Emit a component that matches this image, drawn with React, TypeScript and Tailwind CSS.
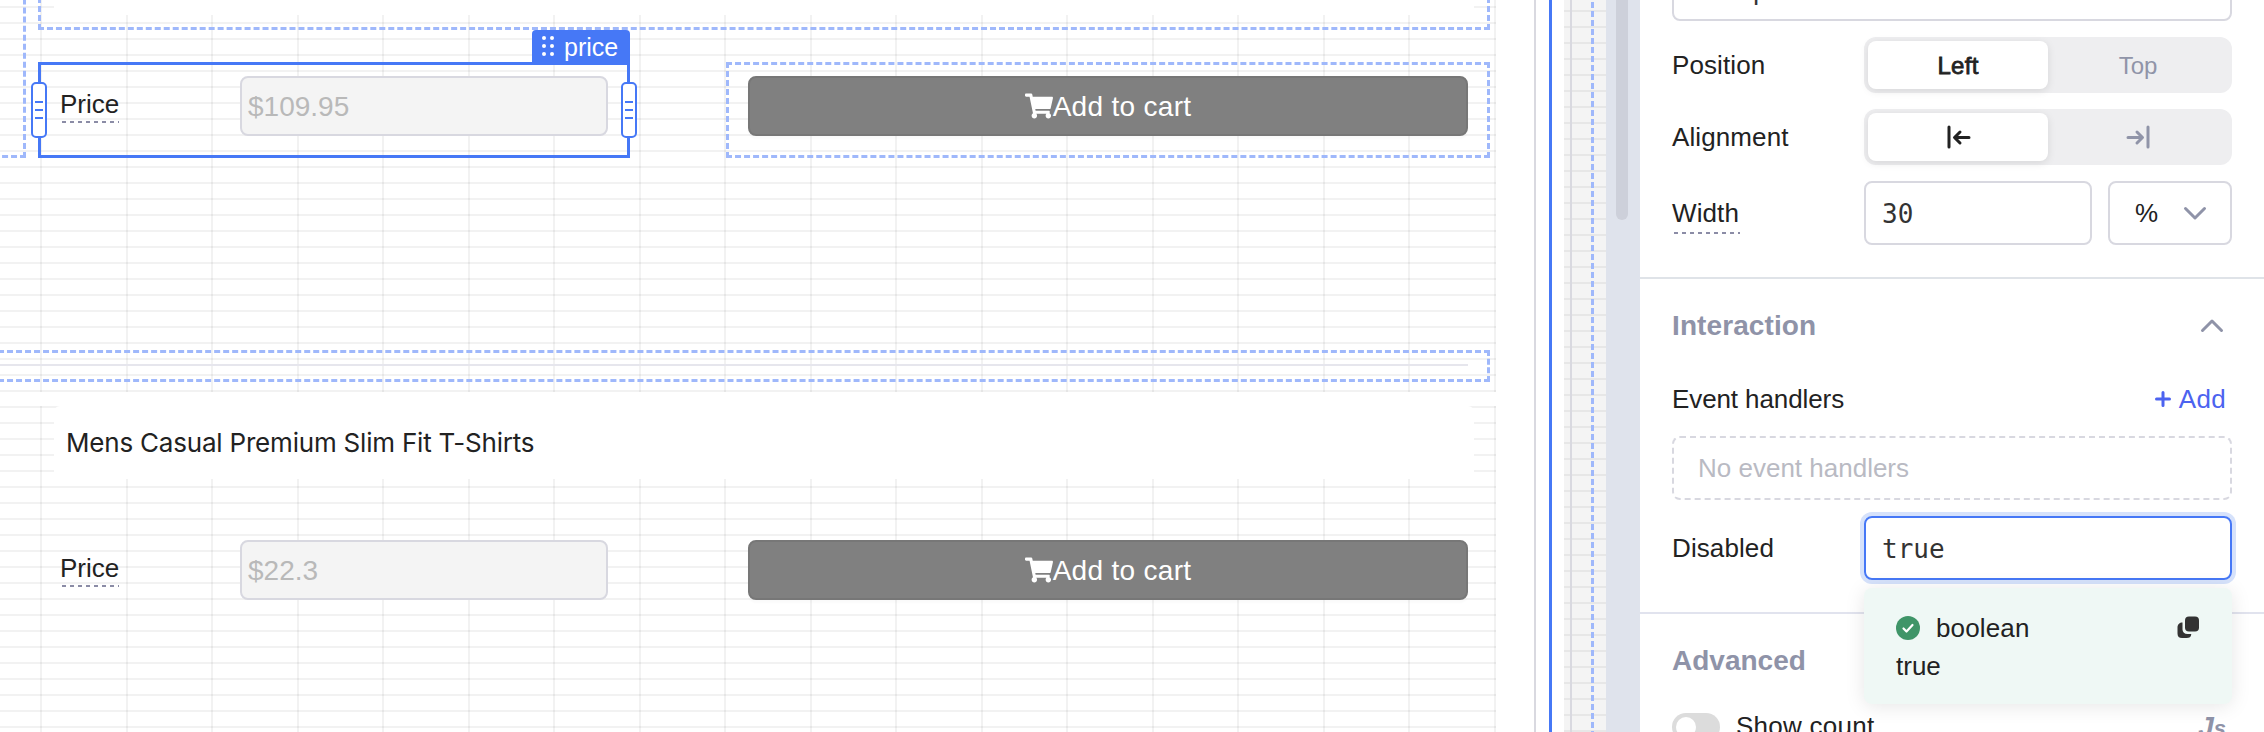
import React from "react";
import { FaShoppingCart } from "react-icons/fa";

const BTN =
  "flex h-[60px] w-[720px] items-center justify-center rounded-[8px] border-2 border-[#777777] bg-[#808080] text-[28px] leading-[32px] text-white shadow-[0_3px_2px_rgba(0,0,0,0.02)]";

function PriceField({ value }: { value: string }) {
  return (
    <div className="flex">
      <div className="w-[180px] pt-[11px]">
        <span className="relative inline-block text-[26px] leading-[34px] text-[#222]">
          Price
          <svg className="absolute bottom-[-2px] left-[2px]" width="57" height="2">
            <line x1="0" y1="1" x2="57" y2="1" stroke="#8b8ca6" strokeWidth="2" strokeDasharray="4 4" />
          </svg>
        </span>
      </div>
      <div className="flex h-[60px] w-[368px] items-center rounded-[8px] border-2 border-[#d8d8e0] bg-[#f4f4f4] pl-[6px] pt-[2px] text-[28px] leading-[32px] text-[#b9b9b9]">
        {value}
      </div>
    </div>
  );
}

function CartButton() {
  return (
    <div className={BTN}>
      <FaShoppingCart className="size-[28px] shrink-0" />
      <span className="pt-[2px] tracking-[0.3px]">Add to cart</span>
    </div>
  );
}

function Handle({ className }: { className: string }) {
  return (
    <div className={"absolute flex h-[56px] w-[16px] flex-col items-center justify-center gap-[6px] rounded-[5px] border-2 border-[#4678f6] bg-white " + className}>
      <i className="h-[2px] w-[8px] bg-[#4678f6]" />
      <i className="h-[2px] w-[8px] bg-[#4678f6]" />
      <i className="h-[2px] w-[8px] bg-[#4678f6]" />
    </div>
  );
}

function Grid({ className }: { className: string }) {
  return (
    <svg className={"absolute left-0 w-[1496px] " + className} height="450" width="1496">
      {Array.from({ length: 29 }, (_, i) => (
        <rect key={"h" + i} x="0" y={i * 16} width="1496" height="2" fill="#000" fillOpacity="0.05" />
      ))}
      {Array.from({ length: 18 }, (_, i) => (
        <rect key={"v" + i} x={Math.floor(40.5 + i * 85.5)} y="0" width="2" height="450" fill="#000" fillOpacity="0.05" />
      ))}
    </svg>
  );
}

function Item({ title, price, className }: { title: string; price: string; className: string }) {
  return (
    <div className={"absolute left-0 h-[450px] w-[1496px] " + className}>
      <Grid className="top-0" />
      <div className="relative ml-[54px] flex h-[73px] w-[1420px] items-center rounded-tl-[6px] rounded-tr-[6px] bg-white pl-[12px] font-['Inter'] text-[26px] leading-[36px] tracking-[-0.2px] text-[#222]">
        {title}
      </div>
      <div className="relative mt-[61px] flex pl-[60px]">
        <PriceField value={price} />
        <div className="ml-[140px]">
          <CartButton />
        </div>
      </div>
    </div>
  );
}

function Canvas() {
  return (
    <div className="relative h-full w-[1564px] shrink-0 overflow-hidden bg-white">
      <Item title="" price="$109.95" className="top-[-58px]" />
      <Item title="Mens Casual Premium Slim Fit T-Shirts" price="$22.3" className="top-[406px]" />

      <div className="absolute left-[-500px] top-[-200px] h-[358px] w-[526px] border-[3px] border-dashed border-[#9fb8fb]" />
      <div className="absolute left-[38px] top-[-200px] h-[230px] w-[1452px] border-[3px] border-dashed border-[#9fb8fb]" />
      <div className="absolute left-[726px] top-[62px] h-[96px] w-[764px] border-[3px] border-dashed border-[#9fb8fb]" />
      <div className="absolute left-[-20px] top-[350px] h-[32px] w-[1510px] border-[3px] border-dashed border-[#9fb8fb]" />
      <div className="absolute left-0 top-[364px] h-[2px] w-[1468px] bg-[#e6e6ed]" />

      <div className="absolute left-[38px] top-[62px] h-[96px] w-[592px] border-[3px] border-[#4678f6]">
        <Handle className="left-[-10px] top-[17px]" />
        <Handle className="right-[-10px] top-[17px]" />
        <div className="absolute right-[-3px] top-[-35px] flex h-[32px] w-[98px] items-center rounded-t-[4px] bg-[#4678f6] text-white">
          <svg className="ml-[9px]" width="14" height="22" fill="#fff">
            <circle cx="3" cy="3" r="2" />
            <circle cx="11" cy="3" r="2" />
            <circle cx="3" cy="11" r="2" />
            <circle cx="11" cy="11" r="2" />
            <circle cx="3" cy="19" r="2" />
            <circle cx="11" cy="19" r="2" />
          </svg>
          <span className="ml-[9px] pt-[1px] text-[25px] leading-[28px]">price</span>
        </div>
      </div>

      <div className="absolute left-[1534px] top-0 h-full w-[2px] bg-[#d9d9e0]" />
      <div className="absolute left-[1549px] top-0 h-full w-[3px] bg-[#4678f6]" />
    </div>
  );
}

function Gutter() {
  return (
    <div className="flex h-full w-[76px] shrink-0">
      <svg width="42" height="732" className="shrink-0 bg-[#f4f4f4]">
        {Array.from({ length: 46 }, (_, i) => (
          <rect key={i} x="0" y={10 + i * 16} width="42" height="2" fill="#000" fillOpacity="0.05" />
        ))}
        <rect x="6" y="0" width="2" height="732" fill="#d9d9e0" />
        <line x1="28.5" y1="-7" x2="28.5" y2="732" stroke="#9fb8fb" strokeWidth="3" strokeDasharray="6 3" />
      </svg>
      <div className="flex w-[34px] justify-center bg-[#dfe3ec]">
        <div className="mr-[2px] h-[220px] w-[12px] rounded-b-full bg-[#cdd0da]" />
      </div>
    </div>
  );
}

function Row({ label, children, className, dotted }: { label: string; children: React.ReactNode; className: string; dotted?: boolean }) {
  return (
    <div className={"flex items-center " + className}>
      <div className="w-[192px]">
        <span className="relative inline-block text-[26px] leading-[34px] tracking-[0.1px] text-[#222]">
          {label}
          {dotted && (
            <svg className="absolute bottom-[-4px] left-[2px]" width="66" height="2">
              <line x1="0" y1="1" x2="66" y2="1" stroke="#8b8ca6" strokeWidth="2" strokeDasharray="4 4" />
            </svg>
          )}
        </span>
      </div>
      {children}
    </div>
  );
}

function Segment({ left, right }: { left: React.ReactNode; right: React.ReactNode }) {
  return (
    <div className="flex h-[56px] w-[368px] rounded-[12px] bg-[#eeeef0] p-[4px] text-[24px] leading-[30px]">
      <div className="flex w-[180px] items-center justify-center rounded-[8px] bg-white tracking-[0.3px] text-[#222] shadow-[0_2px_8px_rgba(0,0,0,0.1)] [-webkit-text-stroke:0.8px_#222]">
        {left}
      </div>
      <div className="flex w-[180px] items-center justify-center text-[#9094a8]">{right}</div>
    </div>
  );
}

function Panel() {
  return (
    <div className="relative h-full w-[624px] shrink-0 overflow-hidden bg-white px-[32px]">
      <div className="mt-[-43px] flex h-[64px] items-center rounded-[8px] border-2 border-[#d8d8e0] pl-[16px] pt-[2px] font-['DejaVu_Sans_Mono'] text-[26px] leading-[30px] text-[#333]">
        The price
      </div>
      <Row label="Position" className="mt-[16px]">
        <Segment left={<span className="pt-[2px]">Left</span>} right={<span className="pt-[2px]">Top</span>} />
      </Row>
      <Row label="Alignment" className="mt-[16px]">
        <Segment
          left={
            <svg className="ml-[2px]" width="24" height="24" fill="none" stroke="#222" strokeWidth="3" strokeLinecap="round" strokeLinejoin="round">
              <path d="M2 2v20M22 12.500H8M13 7L7.500 12.500l5.500 5.500" />
            </svg>
          }
          right={
            <svg width="24" height="24" fill="none" stroke="#9094a8" strokeWidth="3" strokeLinecap="round" strokeLinejoin="round">
              <path d="M22 2v20M2 12.500h14M11 7L16.500 12.500l-5.500 5.500" />
            </svg>
          }
        />
      </Row>
      <Row label="Width" dotted className="mt-[16px]">
        <div className="flex h-[64px] w-[228px] items-center rounded-[8px] border-2 border-[#d8d8e0] pl-[16px] pt-[2px] font-['DejaVu_Sans_Mono'] text-[26px] leading-[30px] text-[#333]">30</div>
        <div className="ml-[16px] flex h-[64px] w-[124px] items-center rounded-[8px] border-2 border-[#d8d8e0] pl-[25px] text-[26px] text-[#222]">
          %
          <svg className="ml-[25px]" width="24" height="16" fill="none" stroke="#8f93a8" strokeWidth="3" strokeLinecap="round" strokeLinejoin="round">
            <path d="M2.500 3.500l9.500 9.500 9.500-9.500" />
          </svg>
        </div>
      </Row>
      <div className="-mx-[32px] mt-[32px] h-[2px] bg-[#dfe3e8]" />
      <div className="mt-[30px] flex h-[34px] items-center justify-between text-[28px] font-bold leading-[34px] tracking-[0.1px] text-[#8f93a8]">
        Interaction
        <svg className="mr-[8px]" width="24" height="16" fill="none" stroke="#8f93a8" strokeWidth="3" strokeLinecap="round" strokeLinejoin="round">
          <path d="M2.500 12.500L12 3l9.500 9.500" />
        </svg>
      </div>
      <div className="mt-[39px] flex h-[34px] items-center justify-between text-[26px] leading-[34px] tracking-[-0.1px] text-[#222]">
        Event handlers
        <span className="mr-[6px] flex items-center gap-[8px] tracking-[0.3px] text-[#4c63f0]">
          <svg width="16" height="16" stroke="currentColor" strokeWidth="3" strokeLinecap="round">
            <path d="M8 1.500v13M1.500 8h13" />
          </svg>
          Add
        </span>
      </div>
      <div className="mt-[20px] flex h-[64px] items-center rounded-[8px] border-2 border-dashed border-[#d8d8e0] pl-[24px] text-[26px] leading-[34px] text-[#b9bac3]">No event handlers</div>
      <Row label="Disabled" className="mt-[16px]">
        <div className="flex h-[64px] w-[368px] items-center rounded-[8px] border-2 border-[#4678f6] pl-[16px] pt-[2px] font-['DejaVu_Sans_Mono'] text-[26px] leading-[30px] text-[#333] shadow-[0_0_0_4px_#d6e2fb]">true</div>
      </Row>
      <div className="-mx-[32px] mt-[32px] h-[2px] bg-[#e1e3ee]" />
      <div className="mt-[30px] h-[34px] text-[28px] font-bold leading-[34px] text-[#8f93a8]">Advanced</div>
      <div className="mt-[31px] flex items-start text-[26px] leading-[34px] text-[#222]">
        <div className="mt-[4px] h-[28px] w-[48px] rounded-full bg-[#dcdcdc] p-[4px]">
          <div className="size-[20px] rounded-full bg-white" />
        </div>
        <span className="ml-[16px] tracking-[0.25px]">Show count</span>
        <span className="ml-auto mr-[6px] mt-[1px] text-[28px] font-bold italic text-[#8f93a8]">
          J<span className="text-[22px]">s</span>
        </span>
      </div>

      <div className="absolute left-[224px] top-[588px] h-[116px] w-[368px] rounded-[8px] bg-[#eff8f5] px-[32px] pt-[23px] text-[26px] leading-[34px] text-[#222] shadow-[0_2px_20px_rgba(0,0,0,0.1)]">
        <div className="flex items-center">
          <svg width="24" height="24">
            <circle cx="12" cy="12" r="12" fill="#3f9568" />
            <path d="M7.500 12.500l3 3 6-6.500" fill="none" stroke="#fff" strokeWidth="2.200" strokeLinecap="round" strokeLinejoin="round" />
          </svg>
          <span className="ml-[16px] tracking-[0.15px]">boolean</span>
          <svg className="ml-auto" width="24" height="24" fill="#333">
            <rect x="9" y="0.500" width="14" height="15" rx="4" />
            <path d="M6.500 6.500C3.500 6.500 1.500 8.500 1.500 11.500v6c0 3 1.500 4.500 4.500 4.500h4.500c3 0 4.500-1 4.800-4h-3.800c-3 0-5-1.800-5-4.500z" />
          </svg>
        </div>
        <div className="mt-[4px]">true</div>
      </div>
    </div>
  );
}

export default function App() {
  return (
    <div className="flex h-[732px] w-[2264px] overflow-hidden bg-white font-['Liberation_Sans',sans-serif]">
      <Canvas />
      <Gutter />
      <Panel />
    </div>
  );
}
